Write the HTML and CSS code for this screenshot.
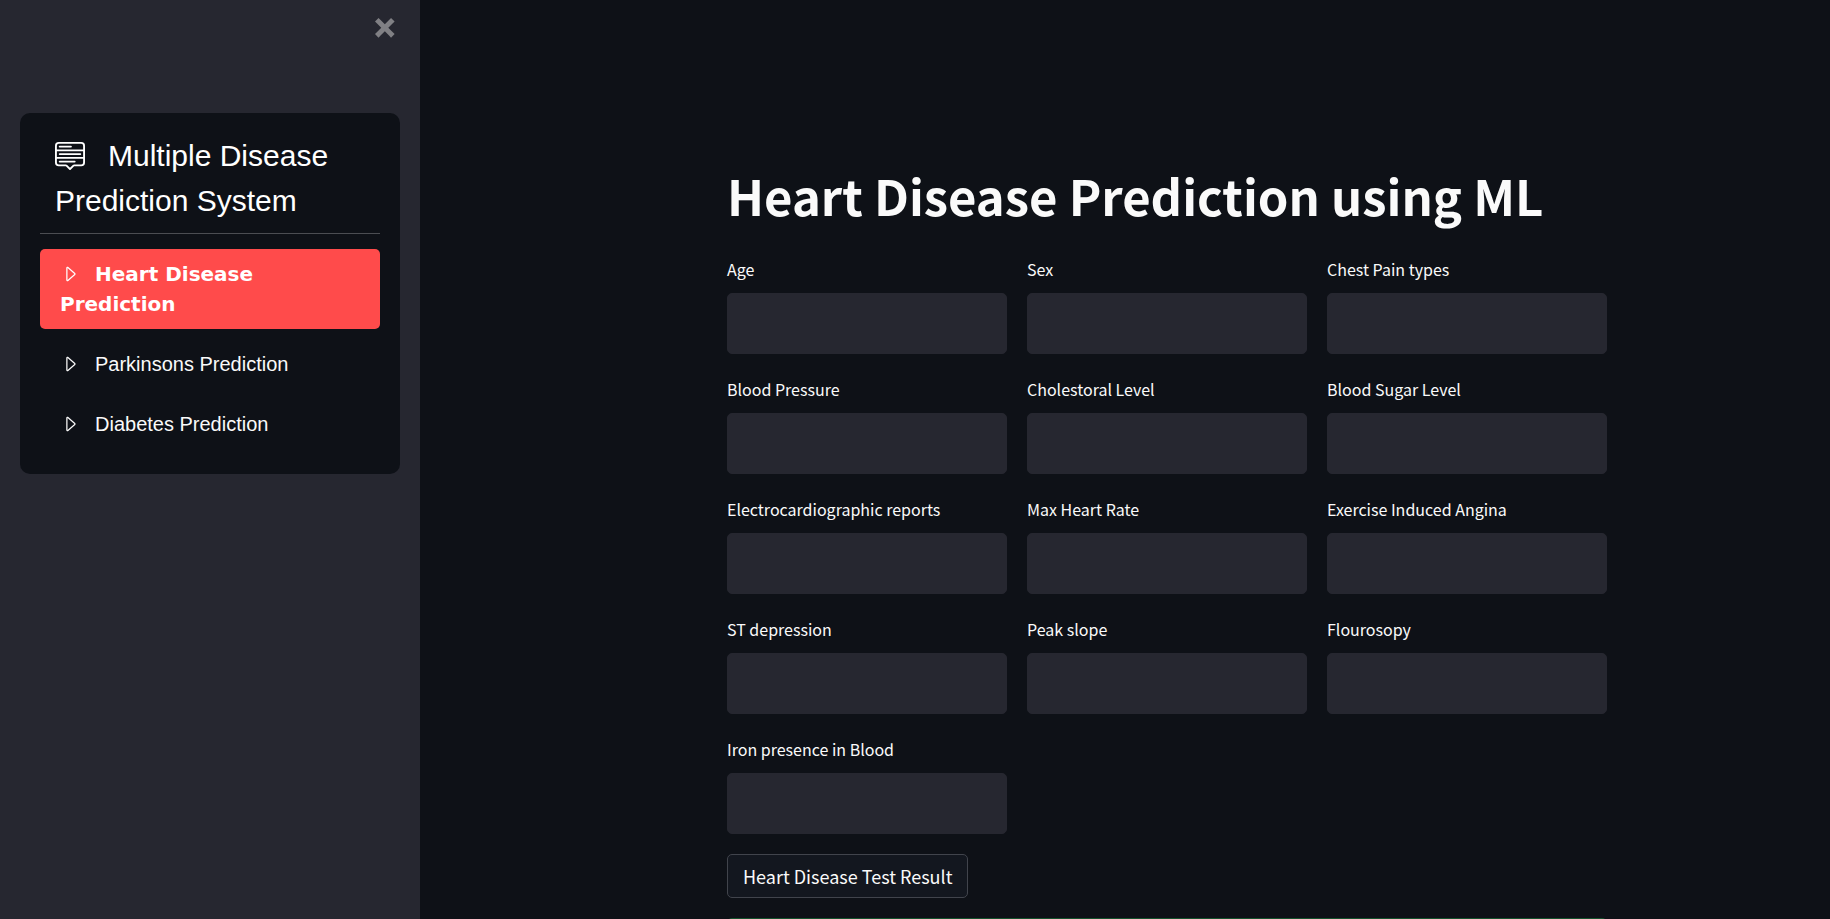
FILE: index.html
```html
<!DOCTYPE html>
<html lang="en">
<head>
    <meta charset="UTF-8">
    <meta name="viewport" content="width=device-width, initial-scale=1.0">
    <title>Multiple Disease Prediction System</title>
    <link rel="stylesheet" href="styles.css">
</head>
<body>
    <!-- Shared icon shapes -->
    <svg class="sprite" aria-hidden="true">
        <symbol id="caret-right" viewBox="0 0 16 16">
            <path d="M6 12.796V3.204L11.481 8 6 12.796zm.659.753 5.48-4.796a1 1 0 0 0 0-1.506L6.66 2.451C6.011 1.885 5 2.345 5 3.204v9.592a1 1 0 0 0 1.659.753z"/>
        </symbol>
    </svg>

    <aside class="sidebar">
        <div class="sidebar-top">
            <button class="close" type="button" aria-label="Close sidebar">
                <svg viewBox="0 0 8 8"><path d="M1.41 0l-1.41 1.41.72.72 1.78 1.81-1.78 1.78-.72.69 1.41 1.44.72-.72 1.81-1.81 1.78 1.81.69.72 1.44-1.44-.72-.69-1.81-1.78 1.81-1.81.72-.72-1.44-1.41-.69.72-1.78 1.78-1.81-1.78-.72-.72z"/></svg>
            </button>
        </div>

        <nav class="menu">
            <div class="menu-title">
                <svg class="title-icon" viewBox="0 0 16 16"><path d="M7.646 15.854a.5.5 0 0 0 .708 0L10.207 14H14a2 2 0 0 0 2-2V3a2 2 0 0 0-2-2H2a2 2 0 0 0-2 2v9a2 2 0 0 0 2 2h3.793l1.853 1.854zM1 9V6h14v3H1zm14 1v2a1 1 0 0 1-1 1h-3.793a1 1 0 0 0-.707.293l-1.5 1.5-1.5-1.5A1 1 0 0 0 5.793 13H2a1 1 0 0 1-1-1v-2h14zm0-5H1V3a1 1 0 0 1 1-1h12a1 1 0 0 1 1 1v2zM2 11.5a.5.5 0 0 0 .5.5h8a.5.5 0 0 0 0-1h-8a.5.5 0 0 0-.5.5zm0-4a.5.5 0 0 0 .5.5h11a.5.5 0 0 0 0-1h-11a.5.5 0 0 0-.5.5zm0-4a.5.5 0 0 0 .5.5h6a.5.5 0 0 0 0-1h-6a.5.5 0 0 0-.5.5z"/></svg>Multiple Disease Prediction System
            </div>
            <ul class="menu-list">
                <li><a class="menu-link active" href="#heart"><svg class="link-icon"><use href="#caret-right"/></svg>Heart Disease Prediction</a></li>
                <li><a class="menu-link" href="#parkinsons"><svg class="link-icon"><use href="#caret-right"/></svg>Parkinsons Prediction</a></li>
                <li><a class="menu-link" href="#diabetes"><svg class="link-icon"><use href="#caret-right"/></svg>Diabetes Prediction</a></li>
            </ul>
        </nav>
    </aside>

    <main class="main">
        <div class="content">
            <h1>Heart Disease Prediction using ML</h1>

            <form>
                <div class="fields">
                    <div class="field">
                        <label for="age">Age</label>
                        <input type="text" id="age">
                    </div>
                    <div class="field">
                        <label for="sex">Sex</label>
                        <input type="text" id="sex">
                    </div>
                    <div class="field">
                        <label for="cp">Chest Pain types</label>
                        <input type="text" id="cp">
                    </div>
                    <div class="field">
                        <label for="trestbps">Blood Pressure</label>
                        <input type="text" id="trestbps">
                    </div>
                    <div class="field">
                        <label for="chol">Cholestoral Level</label>
                        <input type="text" id="chol">
                    </div>
                    <div class="field">
                        <label for="fbs">Blood Sugar Level</label>
                        <input type="text" id="fbs">
                    </div>
                    <div class="field">
                        <label for="restecg">Electrocardiographic reports</label>
                        <input type="text" id="restecg">
                    </div>
                    <div class="field">
                        <label for="thalach">Max Heart Rate</label>
                        <input type="text" id="thalach">
                    </div>
                    <div class="field">
                        <label for="exang">Exercise Induced Angina</label>
                        <input type="text" id="exang">
                    </div>
                    <div class="field">
                        <label for="oldpeak">ST depression</label>
                        <input type="text" id="oldpeak">
                    </div>
                    <div class="field">
                        <label for="slope">Peak slope</label>
                        <input type="text" id="slope">
                    </div>
                    <div class="field">
                        <label for="ca">Flourosopy</label>
                        <input type="text" id="ca">
                    </div>
                    <div class="field">
                        <label for="thal">Iron presence in Blood</label>
                        <input type="text" id="thal">
                    </div>
                </div>

                <button class="submit" type="button">Heart Disease Test Result</button>
            </form>

            <!-- Result message box -->
            <div class="result" role="status"></div>
        </div>
    </main>
</body>
</html>
```
FILE: styles.css
```css
* {
    box-sizing: border-box;
}
body {
    margin: 0;
    display: flex;
    height: 100vh;
    overflow: hidden;
    background-color: #0e1117;
    color: #fafafa;
    font-family: "Noto Sans CJK SC", "Noto Sans", sans-serif;
}
svg {
    fill: currentColor;
}
.sprite {
    display: none;
}

/* Sidebar */
.sidebar {
    flex: 0 0 420px;
    padding: 0 20px;
    background-color: #262730;
}
.sidebar-top {
    display: flex;
    justify-content: flex-end;
    height: 113px;
    padding-top: 18px;
}
.close {
    width: 25px;
    height: 20px;
    padding: 0;
    border: none;
    background: none;
    color: #808084;
    cursor: pointer;
}
.close svg {
    display: block;
    width: 20px;
    height: 20px;
}

/* Menu */
.menu {
    padding: 20px 20px 25px;
    border-radius: 10px;
    background-color: #0e1117;
    font-family: "Liberation Sans", Arial, sans-serif;
}
.menu-title {
    padding: 0 15px 10px;
    border-bottom: 1px solid #4b4d52;
    font-size: 30px;
    line-height: 45px;
    color: #fff;
}
.title-icon {
    width: 30px;
    height: 30px;
    margin-right: 23px;
    vertical-align: -4px;
}
.menu-list {
    display: flex;
    flex-direction: column;
    gap: 10px;
    margin: 15px 0 0;
    padding: 0;
    list-style: none;
}
.menu-link {
    display: block;
    padding: 10px 20px;
    border-radius: 5px;
    font-size: 20px;
    line-height: 30px;
    color: #fafafa;
    text-decoration: none;
}
.menu-link.active {
    background-color: #ff4b4b;
    color: #fff;
    font-family: "Arial Black", "DejaVu Sans", sans-serif;
    font-weight: 900;
}
.link-icon {
    width: 20px;
    height: 20px;
    margin-right: 15px;
    vertical-align: -3px;
}

/* Main area */
.main {
    flex: 1;
    padding: 162px 0 0 84px;
    overflow: auto;
    scrollbar-width: none;
}
.content {
    max-width: 880px;
    margin: 0 auto;
}
h1 {
    margin: 0 0 26px;
    font-size: 49px;
    font-weight: 700;
    line-height: 66px;
}
.fields {
    display: grid;
    grid-template-columns: repeat(3, 1fr);
    gap: 20px;
}
.field label {
    display: block;
    margin-bottom: 9px;
    font-size: 16px;
    line-height: 30px;
}
.field input {
    display: block;
    width: 100%;
    height: 61px;
    padding: 0 15px;
    border: 1px solid #262730;
    border-radius: 5px;
    background-color: #262730;
    color: #fafafa;
    font-family: inherit;
    font-size: 18px;
}
.field input:focus {
    border-color: #ff4b4b;
    outline: none;
}
.submit {
    display: block;
    height: 44px;
    margin: 20px 0;
    padding: 0 15px 1px;
    border: 1px solid #41444c;
    border-radius: 5px;
    background-color: #13171f;
    color: #fafafa;
    font-family: inherit;
    font-size: 18px;
    cursor: pointer;
}
.result {
    height: 70px;
    border-radius: 5px;
    background-color: #14532d;
}
```
